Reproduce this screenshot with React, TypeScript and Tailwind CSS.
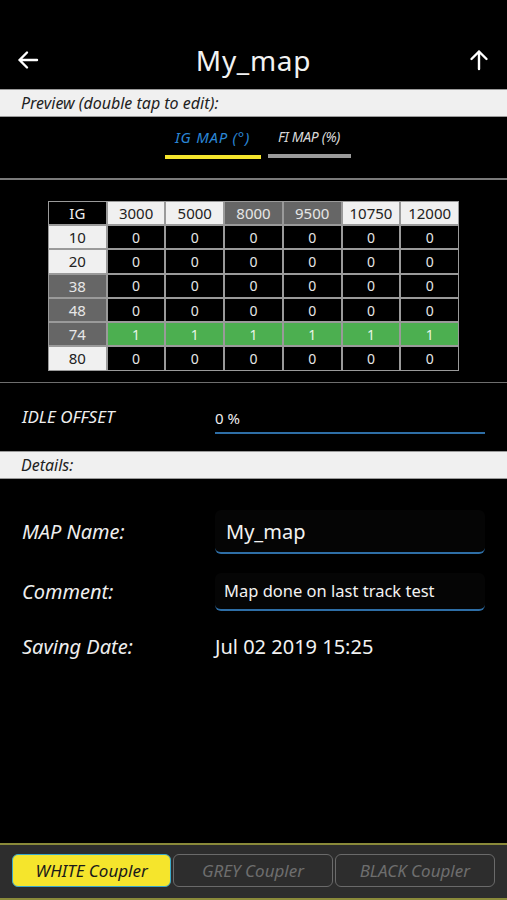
import React from 'react';

const cols = ['3000', '5000', '8000', '9500', '10750', '12000'];
const darkCols = ['8000', '9500'];
const rows = [
    { ig: '10', dark: false, active: false },
    { ig: '20', dark: false, active: false },
    { ig: '38', dark: true, active: false },
    { ig: '48', dark: true, active: false },
    { ig: '74', dark: true, active: true },
    { ig: '80', dark: false, active: false },
];

const ArrowLeft = () => (
    <svg width="24" height="24" viewBox="0 0 24 24" fill="none" stroke="white" strokeWidth="2.4" strokeLinecap="round" strokeLinejoin="round">
        <path d="M21 12H3.5M11 4.5L3.5 12l7.5 7.5" />
    </svg>
);

const ArrowUp = () => (
    <svg width="24" height="24" viewBox="0 0 24 24" fill="none" stroke="white" strokeWidth="2.4" strokeLinecap="round" strokeLinejoin="round">
        <path d="M12 21V3.5M4.5 11L12 3.5l7.5 7.5" />
    </svg>
);

const App: React.FC = () => {
    return (
        <div className="w-[507px] h-[900px] bg-black flex flex-col overflow-hidden text-white" style={{ fontFamily: '"Noto Sans", "Open Sans", sans-serif' }}>
            {/* header */}
            <div className="h-[89px] flex items-center justify-between px-4 pt-[30px]">
                <ArrowLeft />
                <h1 className="text-[28px] font-normal tracking-wide text-[#f2f2f2]">My_map</h1>
                <ArrowUp />
            </div>

            <div className="h-[28px] bg-[#f0f0f0] border-y border-[#9a9a9a] flex items-center px-[21px]">
                <span className="italic text-[16px] text-[#222]">Preview (double tap to edit):</span>
            </div>

            {/* tabs */}
            <div className="h-[63px] flex justify-center gap-[7px] pl-[8px] pt-[9px] border-b-2 border-[#7a7a7a]">
                <div className="w-[96px] flex flex-col items-center">
                    <span className="italic text-[15px] text-[#2a86d6] tracking-wider">IG MAP (°)</span>
                    <div className="mt-[6px] h-[4px] w-full bg-[#f5e52c]" />
                </div>
                <div className="w-[83px] flex flex-col items-center">
                    <span className="italic text-[14px] text-[#d8d8d8] tracking-tight">FI MAP (%)</span>
                    <div className="mt-[7px] h-[4px] w-full bg-[#9a9a9a]" />
                </div>
            </div>

            {/* table */}
            <div className="h-[203px] flex items-start justify-center pt-[21px] border-b border-[#6e6e6e]">
                <div className="grid grid-cols-7 gap-[2px] bg-[#9a9a9a] p-[1px] w-[411px] text-[15px]">
                    <div className="h-[22px] bg-black flex items-center justify-center text-[#eee]">IG</div>
                    {cols.map(c => (
                        <div key={c} className={`h-[22px] flex items-center justify-center ${darkCols.includes(c) ? 'bg-[#666] text-[#e6e6e6]' : 'bg-[#f0f0f0] text-[#222]'}`}>{c}</div>
                    ))}
                    {rows.map(r => (
                        <React.Fragment key={r.ig}>
                            <div className={`h-[22.3px] flex items-center justify-center ${r.dark ? 'bg-[#666] text-[#e6e6e6]' : 'bg-[#f0f0f0] text-[#222]'}`}>{r.ig}</div>
                            {cols.map(c => (
                                <div key={c} className={`h-[22.3px] flex items-center justify-center text-[14px] ${r.active ? 'bg-[#4caf50] text-[#e8f5e8]' : 'bg-black text-[#e6e6e6]'}`}>{r.active ? '1' : '0'}</div>
                            ))}
                        </React.Fragment>
                    ))}
                </div>
            </div>

            {/* idle offset */}
            <div className="h-[68px] flex items-center px-[22px]">
                <span className="w-[193px] italic text-[17px] text-[#eee]">IDLE OFFSET</span>
                <div className="flex-1 border-b-2 border-[#2e6ea6] pb-[2px] pt-[6px]">
                    <span className="text-[15px] text-[#eee]">0 %</span>
                </div>
            </div>

            <div className="h-[28px] bg-[#f0f0f0] border-y border-[#9a9a9a] flex items-center px-[21px]">
                <span className="italic text-[16px] text-[#222]">Details:</span>
            </div>

            {/* details */}
            <div className="flex flex-col px-[22px] pt-[31px]">
                <div className="flex items-center h-[44px]">
                    <span className="w-[193px] italic text-[20px] text-[#eee]">MAP Name:</span>
                    <div className="flex-1 h-[44px] flex items-center px-[11px] rounded-md border-b-2 border-[#2e6ea6] bg-[#050505]">
                        <span className="text-[20px] text-[#f2f2f2] pt-[2px]">My_map</span>
                    </div>
                </div>
                <div className="flex items-center h-[38px] mt-[19px]">
                    <span className="w-[193px] italic text-[20px] text-[#eee]">Comment:</span>
                    <div className="flex-1 h-[38px] flex items-center px-[9px] rounded-md border-b-2 border-[#2e6ea6] bg-[#050505]">
                        <span className="text-[16.5px] text-[#f2f2f2]">Map done on last track test</span>
                    </div>
                </div>
                <div className="flex items-center h-[30px] mt-[21px]">
                    <span className="w-[193px] italic text-[20px] text-[#eee]">Saving Date:</span>
                    <span className="text-[20px] text-[#f2f2f2]">Jul 02 2019 15:25</span>
                </div>
            </div>

            <div className="flex-1" />

            {/* coupler bar */}
            <div className="h-[57px] bg-[#2d2d2d] border-y-2 border-[#8a8a3a] flex items-center gap-[2px] px-[12px] pb-[2px]">
                <button className="w-[160px] h-[33px] rounded-md bg-[#f5e52c] border border-[#3aa8c8] italic text-[17px] text-[#1a1a1a]">WHITE Coupler</button>
                <button className="w-[160px] h-[33px] rounded-md bg-[#2d2d2d] border border-[#6a6a6a] italic text-[17px] text-[#6e6e6e]">GREY Coupler</button>
                <button className="w-[161px] h-[33px] rounded-md bg-[#2d2d2d] border border-[#6a6a6a] italic text-[17px] text-[#6e6e6e]">BLACK Coupler</button>
            </div>
        </div>
    );
};

export default App;
